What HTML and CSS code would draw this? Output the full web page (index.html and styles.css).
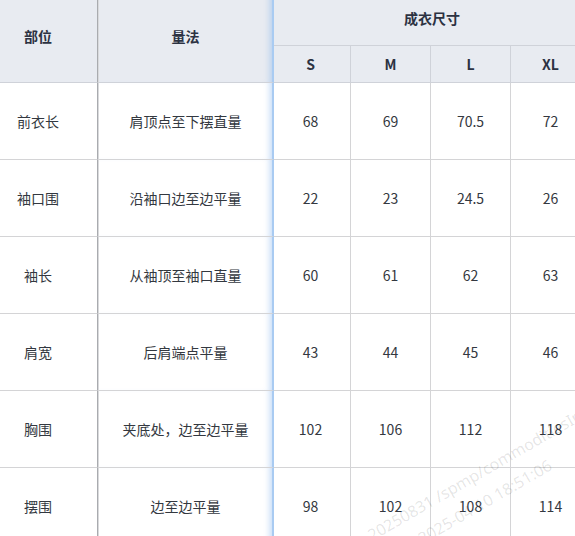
FILE: index.html
```html
<!DOCTYPE html>
<html lang="zh-CN">
<head>
<meta charset="utf-8">
<title>尺码表</title>
<link rel="stylesheet" href="styles.css">
</head>
<body>
<div class="viewport">
  <div class="size-table">
    <div class="cell head c1 tall">部位</div>
    <div class="cell head c2 tall">量法</div>
    <div class="cell head group">成衣尺寸</div>
    <div class="cell head sz s">S</div>
    <div class="cell head sz">M</div>
    <div class="cell head sz">L</div>
    <div class="cell head sz">XL</div>

    <div class="cell c1">前衣长</div>
    <div class="cell c2">肩顶点至下摆直量</div>
    <div class="cell s">68</div><div class="cell">69</div><div class="cell">70.5</div><div class="cell">72</div>

    <div class="cell c1">袖口围</div>
    <div class="cell c2">沿袖口边至边平量</div>
    <div class="cell s">22</div><div class="cell">23</div><div class="cell">24.5</div><div class="cell">26</div>

    <div class="cell c1">袖长</div>
    <div class="cell c2">从袖顶至袖口直量</div>
    <div class="cell s">60</div><div class="cell">61</div><div class="cell">62</div><div class="cell">63</div>

    <div class="cell c1">肩宽</div>
    <div class="cell c2">后肩端点平量</div>
    <div class="cell s">43</div><div class="cell">44</div><div class="cell">45</div><div class="cell">46</div>

    <div class="cell c1">胸围</div>
    <div class="cell c2">夹底处，边至边平量</div>
    <div class="cell s">102</div><div class="cell">106</div><div class="cell">112</div><div class="cell">118</div>

    <div class="cell c1">摆围</div>
    <div class="cell c2">边至边平量</div>
    <div class="cell s">98</div><div class="cell">102</div><div class="cell">108</div><div class="cell">114</div>
  </div>
  <div class="watermark">
    <div class="wm-line">20250831 /spmp/commoditiesInfo</div>
    <div class="wm-line wm-second">2025-04-10 18:51:06</div>
  </div>
</div>
</body>
</html>
```

FILE: styles.css
```css
html, body {
  margin: 0;
  padding: 0;
  background: #ffffff;
}

.viewport {
  position: relative;
  width: 575px;
  height: 536px;
  overflow: hidden;
  font-family: "Noto Sans CJK SC", "Noto Sans", sans-serif;
  font-size: 14px;
  color: #333840;
}

.size-table {
  display: grid;
  grid-template-columns: 119px 176px 77px 80px 80px 80px;
  grid-template-rows: 55px 37px repeat(6, 77px);
  margin-left: -21px;
  margin-top: -9px;
  width: 612px;
}

.cell {
  box-sizing: border-box;
  display: flex;
  align-items: center;
  justify-content: center;
  border-right: 1px solid #d4d4d6;
  border-bottom: 1px solid #d4d4d6;
  background: #ffffff;
  white-space: nowrap;
  padding-bottom: 1px;
}

.head {
  background: #e8ebf1;
  font-weight: 700;
  color: #2c3242;
  border-color: #cfd2d9;
}

.tall {
  grid-row: span 2;
}

.group {
  grid-column: span 4;
}

.c1 {
  border-right: 1px solid #a9abaf;
}

.c2 {
  border-left: 1px solid #d9dadc;
  border-right: 2px solid #a9cbf2;
  box-shadow: inset -7px 0 6px -5px rgba(120, 170, 235, 0.45);
}

.s {
  padding-right: 3px;
}

.watermark {
  position: absolute;
  left: 362px;
  top: 524px;
  transform-origin: 0 0;
  transform: rotate(-30deg);
  font-family: "Noto Sans", sans-serif;
  font-size: 16px;
  line-height: 28px;
  color: rgba(0, 0, 0, 0.11);
  pointer-events: none;
  white-space: nowrap;
}

.wm-second {
  padding-left: 42px;
}
```
